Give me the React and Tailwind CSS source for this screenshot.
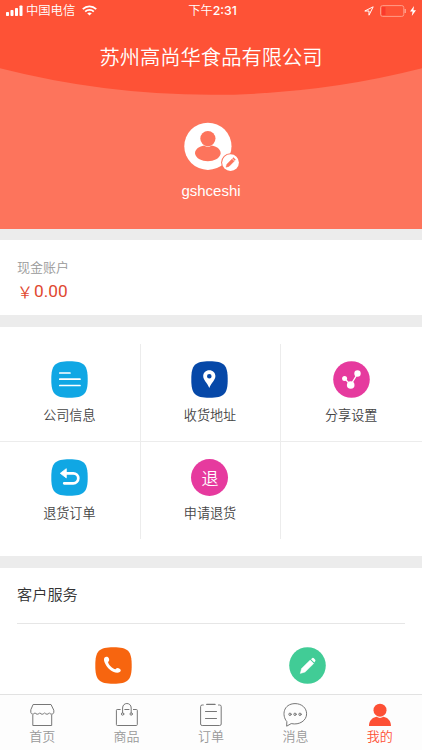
import React from "react";

const SQUIRCLE =
  "M18.5 0.3C33 0.3 36.7 3.8 36.7 18.5S33 36.7 18.5 36.7 0.3 33.2 0.3 18.5 4 0.3 18.5 0.3Z";

const IconBase = ({ color, round, children }) => (
  <svg width="37" height="37" viewBox="0 0 37 37" fill="none" className="shrink-0">
    {round ? (
      <circle cx="18.5" cy="18.5" r="18.3" fill={color} />
    ) : (
      <path d={SQUIRCLE} fill={color} />
    )}
    {children}
  </svg>
);

const CompanyIcon = () => (
  <IconBase color="#10a7e4">
    <path d="M8.8 12H19M8.8 18.2H29M8.8 24.5H29" stroke="#fff" strokeWidth="1.7" strokeLinecap="round" />
  </IconBase>
);

const AddressIcon = () => (
  <IconBase color="#0648a8">
    <path
      fillRule="evenodd"
      d="M18.3 9.2C14.8 9.2 12.2 11.8 12.2 15.1C12.2 19 16 21.6 18.3 27C20.6 21.6 24.4 19 24.4 15.1C24.4 11.8 21.8 9.2 18.3 9.2ZM18.3 13A2.3 2.3 0 1 1 18.3 17.6A2.3 2.3 0 1 1 18.3 13Z"
      fill="#fff"
    />
  </IconBase>
);

const ShareIcon = () => (
  <IconBase color="#e63a9e" round>
    <path d="M11.6 17.5L17.7 24L24.5 12.6" stroke="#fff" strokeWidth="1.3" />
    <circle cx="11.6" cy="17.4" r="2.5" fill="#fff" />
    <circle cx="17.7" cy="24" r="3.8" fill="#fff" />
    <circle cx="24.5" cy="12.5" r="3.2" fill="#fff" />
  </IconBase>
);

const ReturnIcon = () => (
  <IconBase color="#10a7e4">
    <path d="M14 14.3H22.3A4.9 4.9 0 0 1 22.3 24.3H13.2" stroke="#fff" strokeWidth="2.7" strokeLinecap="round" />
    <path d="M9.3 14.3L15.3 9.7V18.9Z" fill="#fff" stroke="#fff" strokeWidth="0.8" strokeLinejoin="round" />
  </IconBase>
);

const RefundIcon = () => (
  <div className="flex h-[37px] w-[37px] items-center justify-center rounded-full bg-[#e63a9e] pb-px text-[17px] leading-none text-white">
    退
  </div>
);

const PhoneIcon = () => (
  <IconBase color="#f7650f">
    <path
      d="M9.6 10.6C10.8 9.2 12.8 9.4 13.7 11C14.6 12.8 14.3 13.9 13 15C13.8 18.2 17.3 21.6 20.5 22.3C21.6 21 22.8 20.7 24.6 21.7C26.2 22.6 26.1 24.1 24.8 25C22.3 26.6 17.6 25.2 13.8 21.7C10.2 18 7.8 13 9.6 10.6Z"
      fill="#fff"
    />
  </IconBase>
);

const FeedbackIcon = () => (
  <IconBase color="#41cc96" round>
    <path d="M11.3 26.4L12.6 21.5L21.2 13.1L24.7 16.6L16.1 25Z" fill="#fff" stroke="#fff" strokeWidth="0.5" strokeLinejoin="round" />
    <path d="M22 12.2L23.4 11Q24.2 10.6 24.9 11.3L26.2 12.7Q26.8 13.5 26.2 14.2L25.3 15.6Z" fill="#fff" />
  </IconBase>
);

const services = [
  { label: "公司信息", Icon: CompanyIcon },
  { label: "收货地址", Icon: AddressIcon },
  { label: "分享设置", Icon: ShareIcon },
  { label: "退货订单", Icon: ReturnIcon },
  { label: "申请退货", Icon: RefundIcon },
];

const TabIcon = ({ children }) => (
  <svg width="26" height="26" viewBox="0 0 26 26" fill="none" stroke="#777" strokeWidth="1" strokeLinejoin="round" strokeLinecap="round">
    {children}
  </svg>
);

const tabs = [
  {
    label: "首页",
    icon: (
      <TabIcon>
        <path d="M4.5 2.5H22L24.8 8.2V10.2C24.8 12.6 21.2 12.7 20.4 10.8C19.4 12.7 16.7 12.7 15.6 10.8C14.6 12.7 11.8 12.7 10.8 10.8C9.8 12.7 7 12.7 6 10.8C5 12.7 1.8 12.4 1.8 10.2V8.2Z" />
        <path d="M3.8 13V23.5H22.7V13" />
      </TabIcon>
    ),
  },
  {
    label: "商品",
    icon: (
      <TabIcon>
        <path d="M6.2 7.5H3.2Q2.4 7.5 2.4 8.3V22.5Q2.4 23.5 3.3 23.5H22.4Q23.3 23.5 23.3 22.5V8.3Q23.3 7.5 22.5 7.5H19.4M10.8 7.5H15" />
        <path d="M8.6 10.8V6C8.6 0 17.2 0 17.2 6V10.8" />
        <circle cx="8.6" cy="12" r="1.2" />
        <circle cx="17.2" cy="12" r="1.2" />
      </TabIcon>
    ),
  },
  {
    label: "订单",
    icon: (
      <TabIcon>
        <path d="M5.3 3H4.2Q2.6 3 2.6 4.5V22Q2.6 23.5 4.2 23.5H21.6Q23.2 23.5 23.2 22V4.5Q23.2 3 21.6 3H20.5" />
        <path d="M8.8 2.4H17" strokeWidth="1.4" />
        <path d="M7.5 9.5H18.5M7.5 16.5H18.5" />
      </TabIcon>
    ),
  },
  {
    label: "消息",
    icon: (
      <TabIcon>
        <path d="M4.6 19.3C-0.4 13.5 1.2 1.8 13 1.6C20 1.6 24.6 6.2 24.6 11.8C24.6 18.6 17.5 23.3 9.2 21.6L5 24Z" />
        <circle cx="8" cy="12.3" r="1.2" />
        <circle cx="13" cy="12.3" r="1.2" />
        <circle cx="18" cy="12.3" r="1.2" />
      </TabIcon>
    ),
  },
  {
    label: "我的",
    active: true,
    icon: (
      <svg width="26" height="26" viewBox="0 0 26 26" fill="#fd5035">
        <circle cx="13" cy="8.2" r="6.5" />
        <path d="M2 24C2 18.5 5.5 15.7 9.5 14.8Q13 17 16.5 14.8C20.5 15.7 24 18.5 24 24Z" />
      </svg>
    ),
  },
];

const StatusBar = () => (
  <div className="grid h-[21px] grid-cols-3 items-center px-[6px] text-[12.3px] leading-none text-white">
    <div className="flex items-center">
      <svg width="17" height="11" viewBox="0 0 17 11" fill="#fff">
        <rect x="0" y="7" width="3" height="4" rx="0.7" />
        <rect x="4.5" y="5" width="3" height="6" rx="0.7" />
        <rect x="9" y="3" width="3" height="8" rx="0.7" />
        <rect x="13.5" y="0.5" width="3" height="10.5" rx="0.7" />
      </svg>
      <span className="ml-[3px]">中国电信</span>
      <svg width="15" height="11" viewBox="0 0 15 11" fill="none" stroke="#fff" strokeWidth="1.8" className="ml-[7px]">
        <path d="M0.8 4.1C4.5 0.4 10.5 0.4 14.2 4.1" />
        <path d="M3.2 6.6C5.6 4.3 9.4 4.3 11.8 6.6" />
        <path d="M5.2 8.2Q7.5 6.6 9.8 8.2L7.5 10.6Z" fill="#fff" stroke="none" />
      </svg>
    </div>
    <div className="pl-[3px] text-center">
      下午<span className="font-['Inter'] text-[12.3px] font-medium">2:31</span>
    </div>
    <div className="flex items-center justify-end">
      <svg width="10" height="10" viewBox="0 0 10 10" fill="none" stroke="#fff" strokeWidth="1" strokeLinejoin="round">
        <path d="M9.2 0.8L0.8 5H5V9.2Z" />
      </svg>
      <svg width="27" height="12" viewBox="0 0 27 12" fill="none" className="ml-[6px]">
        <rect x="0.6" y="0.6" width="23.2" height="10.8" rx="2" stroke="#ff9c88" />
        <rect x="2" y="2" width="3.5" height="8" fill="#fa3a2c" />
        <path d="M25.2 4V8" stroke="#ff9c88" strokeWidth="1.6" />
      </svg>
      <svg width="6" height="10" viewBox="0 0 6 10" fill="#fff" className="ml-[3px]">
        <path d="M4 0L0 5.6H2.6L1.8 10L6 4.2H3.4Z" />
      </svg>
    </div>
  </div>
);

const ProfileHeader = () => (
  <header className="relative h-[229px] shrink-0 bg-[#fd745c]">
    <svg width="422" height="96" viewBox="0 0 422 96" className="absolute top-0 left-0">
      <path d="M0 0H422V68.3A853 853 0 0 1 0 68.3Z" fill="#fe5236" />
    </svg>
    <div className="relative flex flex-col items-center">
      <div className="w-full">
        <StatusBar />
      </div>
      <h1 className="mt-5 text-[20.3px] leading-[30px] font-[350] text-white">苏州高尚华食品有限公司</h1>
      <svg width="58" height="52" viewBox="0 0 58 52" className="mt-[51px]">
        <circle cx="25.9" cy="24.3" r="23.6" fill="#fff" />
        <circle cx="25.9" cy="16.6" r="7.6" fill="#fd745c" />
        <path d="M13 31.6C13 27 17.5 24.4 22 23.6Q25.9 26 29.8 23.6C34.5 24.4 38.7 27 38.7 31.6C37 41.8 14.7 41.8 13 31.6Z" fill="#fd745c" />
        <circle cx="48.5" cy="40.6" r="9.4" fill="#fd745c" />
        <circle cx="48.5" cy="40.6" r="8.4" fill="#fff" />
        <path d="M44 45.2L44.8 42.2L50 37L52.2 39.2L47 44.4ZM50.6 36.4L51.5 35.6L53.5 37.7L52.7 38.6Z" fill="#fd745c" stroke="#fd745c" strokeWidth="0.4" />
      </svg>
      <p className="mt-[7px] font-['Liberation_Sans'] text-[15px] leading-[20px] text-white">gshceshi</p>
    </div>
  </header>
);

const App = () => {
  return (
    <div className="flex h-[750px] w-[422px] flex-col overflow-hidden bg-[#ececec] font-['Noto_Sans_CJK_SC',sans-serif] font-[350] text-[#444]">
      <ProfileHeader />

      {/* Cash account */}
      <section className="mt-[11px] h-[75px] shrink-0 bg-white px-[17px] pt-[17px]">
        <p className="text-[13px] leading-5 text-[#999]">现金账户</p>
        <p className="mt-[4px] flex items-center text-[16px] leading-5 text-[#df4830]">
          <span className="w-[17px]">￥</span>
          <span className="font-['Roboto'] text-[17.3px] font-normal">0.00</span>
        </p>
      </section>

      {/* Services */}
      <section className="mt-3 h-[229px] shrink-0 bg-white pt-[17px]">
        <div className="grid grid-cols-3 grid-rows-[98px_97px]">
          {services.map(({ label, Icon }, i) => (
            <div
              key={label}
              className={`flex flex-col items-center border-[#ececec] pt-[17px] pr-px ${i % 3 < 2 ? "border-r" : ""} ${i < 3 ? "border-b" : ""}`}
            >
              <Icon />
              <span className="mt-[7px] text-[13.1px] leading-5">{label}</span>
            </div>
          ))}
        </div>
      </section>

      {/* Customer service */}
      <section className="mt-3 min-h-0 flex-1 bg-white px-[17px]">
        <h2 className="h-[56px] border-b border-[#e6e6e6] pt-[13px] text-[15.2px] leading-6 text-[#333]">客户服务</h2>
        <div className="grid grid-cols-2 pt-[23px]">
          <div className="flex justify-center pr-[2px]">
            <PhoneIcon />
          </div>
          <div className="flex justify-center pr-[2px]">
            <FeedbackIcon />
          </div>
        </div>
      </section>

      {/* Tab bar */}
      <nav className="grid h-[56px] shrink-0 grid-cols-5 border-t border-[#e2e2e2] bg-[#fdfdfd]">
        {tabs.map((tab) => (
          <div key={tab.label} className="flex flex-col items-center pt-[7px]">
            {tab.icon}
            <span className={`text-[13px] leading-4 ${tab.active ? "text-[#fd5035]" : "text-[#999]"}`}>
              {tab.label}
            </span>
          </div>
        ))}
      </nav>
    </div>
  );
};

export default App;
